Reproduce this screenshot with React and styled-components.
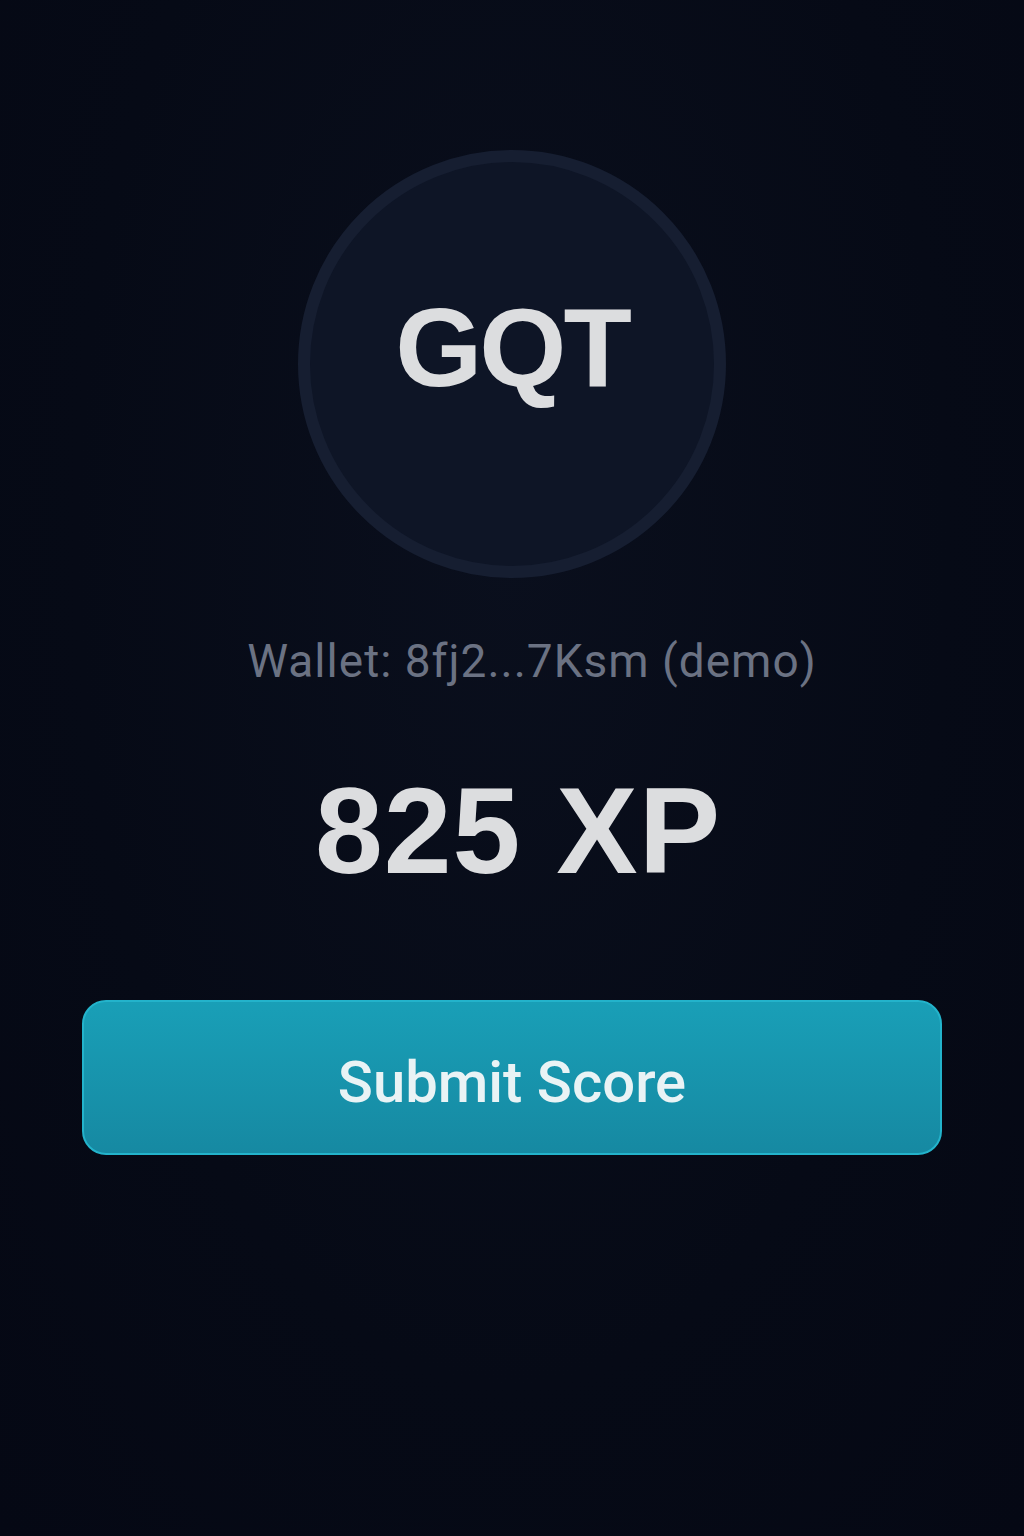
import React from "react"
import styled, { createGlobalStyle } from "styled-components"

const GlobalStyle = createGlobalStyle`
  html, body {
    margin: 0;
    padding: 0;
    background: #060a16;
  }
  body {
    font-family: "Inter", "Liberation Sans", sans-serif;
  }
`

const Screen = styled.main`
  width: 1024px;
  height: 1536px;
  box-sizing: border-box;
  padding: 150px 82px 0;
  display: flex;
  flex-direction: column;
  align-items: center;
  background: radial-gradient(ellipse at 50% 35%, #0a0f1d 0%, #060a16 60%, #050814 100%);
`

const Badge = styled.div`
  width: 428px;
  height: 428px;
  box-sizing: border-box;
  border-radius: 50%;
  border: 12px solid #161e31;
  background: #0e1526;
  display: flex;
  align-items: center;
  justify-content: center;
`

const BadgeText = styled.span`
  font-family: "Liberation Sans", Arial, sans-serif;
  font-weight: 700;
  font-size: 112px;
  letter-spacing: -3px;
  color: #dcdddf;
  margin-top: -34px;
`

const Wallet = styled.p`
  margin: 60px 0 0 40px;
  font-family: "Roboto", "Liberation Sans", sans-serif;
  font-size: 46px;
  letter-spacing: 1px;
  color: #6b7283;
  line-height: 1;
`

const Score = styled.h1`
  margin: 86px 0 0 12px;
  font-family: "Liberation Sans", Arial, sans-serif;
  font-weight: 700;
  font-size: 122px;
  letter-spacing: 1px;
  line-height: 1;
  color: #dcdddf;
`

const SubmitButton = styled.button`
  margin-top: 108px;
  width: 100%;
  height: 155px;
  border-radius: 24px;
  border: 2px solid #23b3cb;
  background: linear-gradient(180deg, #199fb7 0%, #1689a2 100%);
  color: #e9f3f5;
  font-family: "Roboto", "Liberation Sans", sans-serif;
  font-weight: 500;
  font-size: 58px;
  padding-top: 10px;
  cursor: pointer;
`

export default function App() {
  return (
    <>
      <GlobalStyle />
      <Screen>
        <Badge>
          <BadgeText>GQT</BadgeText>
        </Badge>
        <Wallet>Wallet: 8fj2...7Ksm (demo)</Wallet>
        <Score>825 XP</Score>
        <SubmitButton>Submit Score</SubmitButton>
      </Screen>
    </>
  )
}
